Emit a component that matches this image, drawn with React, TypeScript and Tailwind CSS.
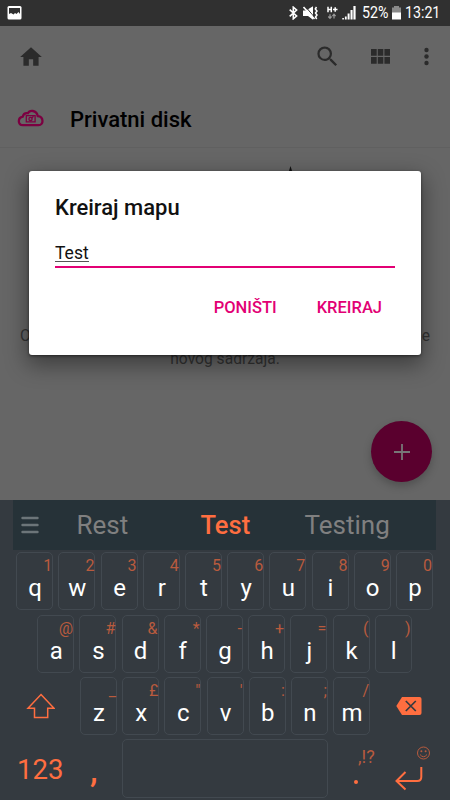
import React from 'react';

const font = "font-['Roboto','Noto_Sans',sans-serif]";

function StatusBar() {
  return (
    <div className="flex h-[26px] shrink-0 items-center bg-[#303030] text-white">
      <svg className="ml-[7px]" width="15" height="14" viewBox="0 0 15 14">
        <rect x="0.5" y="0" width="14" height="13.5" rx="1.5" fill="#fff" />
        <path d="M2 2h11v6l-1.500-2-2 2-1.500-1-1.500 1.500L4 7 2 8z" fill="#303030" />
      </svg>
      <svg className="ml-auto" width="9" height="14" viewBox="0 0 9 14" fill="none" stroke="#fff" strokeWidth="1.600">
        <path d="M.7 3.600 7.600 10 4.300 12.800V1.200L7.600 4 .7 10.400" />
      </svg>
      <svg className="ml-[5px]" width="16" height="14" viewBox="0 0 16 14">
        <path d="M0 4.500h3L10 .3v13.400L5 10H0z" fill="#fff" />
        <path d="M2.300.3 12 12" stroke="#303030" strokeWidth="1" />
        <path d="M.5 1l11 12" stroke="#fff" strokeWidth="1.600" />
        <path d="M13.500 1l-1.200 2L14 5l-1.500 2L14 9l-1.500 2 1.200 2" fill="none" stroke="#fff" strokeWidth="1.500" />
      </svg>
      <svg className="ml-[8px]" width="11" height="14" viewBox="0 0 11 14">
        <path d="M1 .8v5.400M4.300.8v5.400M1 3.500h3.300M6 3.500h4.500M8.200 1.300v4.400" stroke="#fff" strokeWidth="1.500" />
        <path d="M3 8.200v4M1.300 10.500 3 12.400l1.600-1.900M7 12.600v-4M5.400 10.200 7 8.300l1.600 1.900" stroke="#999" strokeWidth="1.200" fill="none" />
      </svg>
      <svg className="ml-[4px]" width="14" height="14" viewBox="0 0 14 14" fill="#fff">
        <path d="M.3 12h1.600v1.500H.3zM2.900 10.500h1.800v3H2.900zM5.600 7.500h2v6h-2zM8.500 4h2.100v9.500H8.500zM11.400 0h2.200v13.500h-2.200z" />
      </svg>
      <span className="ml-[6px] w-[26px] pt-[1px] text-[16.500px] leading-none"><span className="inline-block origin-left scale-x-[0.86]">52%</span></span>
      <svg className="ml-[4px]" width="9" height="14" viewBox="0 0 9 14">
        <path d="M2 0h5v1.500h2V7H0V1.500h2z" fill="#8a8a8a" />
        <rect y="6.500" width="9" height="7" fill="#fff" />
      </svg>
      <span className="mr-[9px] ml-[4px] w-[36px] pt-[1px] text-[16.500px] leading-none"><span className="inline-block origin-left scale-x-[0.86]">13:21</span></span>
    </div>
  );
}

function Toolbar() {
  return (
    <div className="flex h-[61px] items-center pr-[21.500px] pl-[18px] text-[#2b2b2b]">
      <svg width="26" height="26" viewBox="0 0 24 24" fill="currentColor"><path d="M10 20v-6h4v6h5v-8h3L12 3 2 12h3v8z" /></svg>
      <svg className="ml-auto" width="27" height="27" viewBox="0 0 24 24" fill="currentColor">
        <path d="M15.500 14h-.79l-.28-.27A6.471 6.471 0 0 0 16 9.500 6.500 6.500 0 1 0 9.500 16c1.610 0 3.090-.59 4.230-1.570l.27.28v.79l5 4.990L20.490 19l-4.990-5zm-6 0C7.010 14 5 11.990 5 9.500S7.010 5 9.500 5 14 7.010 14 9.500 11.990 14 9.500 14z" />
      </svg>
      <svg className="ml-[29.500px]" width="19" height="15" viewBox="0 0 19 15" fill="currentColor">
        <path d="M0 0h5.700v6.800H0zM6.800 0h5.500v6.800H6.800zM13.400 0H19v6.800h-5.600zM0 8h5.700v6.700H0zM6.800 8h5.500v6.700H6.800zM13.400 8H19v6.700h-5.600z" />
      </svg>
      <svg className="ml-[34px]" width="5" height="19" viewBox="0 0 5 19" fill="currentColor">
        <circle cx="2.500" cy="3" r="2.200" /><circle cx="2.500" cy="9.500" r="2.200" /><circle cx="2.500" cy="16" r="2.200" />
      </svg>
    </div>
  );
}

function Dialog() {
  return (
    <div className="absolute top-[171px] left-[29px] flex h-[184px] w-[392px] flex-col rounded-[3px] bg-white pr-[26px] pl-[26px] shadow-[0_8px_22px_2px_rgba(0,0,0,0.4),0_1px_3px_rgba(0,0,0,0.5)]">
      <h2 className="mt-[26px] text-[22px] leading-[22px] font-medium text-[#111]">Kreiraj mapu</h2>
      <div className="mt-[20px] h-[29px] border-b-2 border-[#e20074] text-[17.500px] leading-[26px] text-[#111]">
        <span className="inline-block h-[23px] border-b border-[#555] leading-[29px]">Test</span>
      </div>
      <div className="mt-[30px] flex justify-end gap-[40px] pr-[13px] text-[16.500px] leading-[20px] font-medium text-[#e20074]">
        <button>PONIŠTI</button>
        <button>KREIRAJ</button>
      </div>
    </div>
  );
}

function Key({ label, hint }: { label: string; hint: string }) {
  return (
    <div className="flex h-[58px] w-[37px] flex-col rounded-[5px] border border-[#424950] pt-[5px]">
      <span className="text-right text-[16px] leading-[16px] text-[#b95b3e]">{hint}</span>
      <span className="mt-[2px] pl-[1px] text-center text-[24px] leading-[24px] text-white">{label}</span>
    </div>
  );
}

function Keys({ labels, hints }: { labels: string; hints: string }) {
  return (
    <div className="flex gap-[5.200px]">
      {labels.split('').map((l, i) => <Key key={l} label={l} hint={hints[i]} />)}
    </div>
  );
}

function Keyboard() {
  return (
    <div className="flex h-[300px] flex-col bg-[#343a40]">
      <div className="mr-[14px] ml-[13px] flex h-[50px] items-center bg-[#263238] text-[26px] text-[#808080]">
        <svg className="ml-[8px]" width="18" height="18" viewBox="0 0 18 18" stroke="#6c7579" strokeWidth="2.400" strokeLinecap="round"><path d="M1.500 2h15M1.500 9h15M1.500 16h15" /></svg>
        <span className="ml-[37.500px] w-[124px]">Rest</span>
        <span className="w-[104px] text-[25.500px] font-medium text-[#ff6e40]">Test</span>
        <span>Testing</span>
      </div>
      <div className="mt-[2px] pl-[16.200px]"><Keys labels="qwertyuiop" hints="1234567890" /></div>
      <div className="mt-[5px] pl-[37.200px]"><Keys labels="asdfghjkl" hints="@#&*-+=()" /></div>
      <div className="mt-[4px] flex items-center">
        <svg className="mr-[25px] ml-[26px]" width="29" height="26" viewBox="0 0 29 26" fill="none" stroke="#ff6e40" strokeWidth="1.500"><path d="M15 1.500 28 15.300h-6.300v9.200H8.500v-9.200H2z" /></svg>
        <Keys labels="zxcvbnm" hints={'_£"\':;/'} />
        <svg className="ml-[26px]" width="26" height="18" viewBox="0 0 26 18">
          <path d="M6 0h17.500Q25.500 0 25.500 2v14q0 2-2 2H6L.3 9z" fill="#ff6e40" />
          <path d="m9.800 4 10 10m0-10-10 10" stroke="#343a40" strokeWidth="1.700" />
        </svg>
      </div>
      <div className="mt-[4px] flex h-[59px] text-[#ff6e40]">
        <span className="ml-[17px] w-[73px] pt-[15px] text-[27.500px] leading-[32px]">123</span>
        <span className="w-[32px] pt-[14px] text-[34px] leading-[34px] font-medium">,</span>
        <div className="h-[59px] w-[206px] rounded-[5px] border border-[#424950]" />
        <div className="ml-[24px] flex w-[30px] flex-col pt-[9px]">
          <span className="ml-[6px] text-[18px] leading-[18px] text-[#b95b3e]">,!?</span>
          <i className="mt-[14px] ml-[2px] size-[4px] rounded-full bg-[#ff6e40]" />
        </div>
        <svg className="ml-[13px]" width="36" height="59" viewBox="0 0 36 59" fill="none">
          <g stroke="#b95b3e"><circle cx="28.500" cy="14" r="6" /><path d="M25 15.500q3.500 4.500 7 0" /></g>
          <g fill="#b95b3e"><circle cx="26.400" cy="12.300" r="1" /><circle cx="30.600" cy="12.300" r="1" /></g>
          <path d="M26.300 28v10q0 4-4 4H2.500M10.500 33l-9 9 9 8.500" stroke="#ff6e40" strokeWidth="2" />
        </svg>
      </div>
    </div>
  );
}

export default function App() {
  return (
    <div className={`relative flex h-[800px] w-[450px] flex-col overflow-hidden bg-[#666] ${font}`}>
      <StatusBar />
      <div className="relative h-[474px] shrink-0 overflow-hidden bg-[#666]">
        <Toolbar />
        <div className="flex h-[61px] items-center border-b border-[#606060] pl-[17px]">
          <svg className="mt-[1px]" width="27" height="18" viewBox="0 0 27 18" fill="none" stroke="#7c0041" strokeWidth="2.300">
            <path d="M6 16.200C.5 16.200.5 8.500 5.800 7.600 6.500 4.500 8.500 3.800 10.800 4.200 12.500 1 19.500.5 20.800 7.200c6.200.6 6 9 .8 9z" />
            <path d="M9.300 6.600h8.800v6.200H9.300z" strokeWidth="1.300" /><circle cx="13.500" cy="9.900" r="1.600" strokeWidth="1.300" /><path d="m14.500 9.200 2-2" strokeWidth="1.300" />
          </svg>
          <h1 className="ml-[26px] pt-[5px] text-[22px] leading-[26px] font-medium text-black">Privatni disk</h1>
        </div>
        <svg className="mt-[18px] ml-[288px]" width="5" height="8" viewBox="0 0 5 8"><path d="M2.500 0 5 8H0z" fill="#111" /></svg>
        <div className="mt-[151px] px-[20px] text-[15.600px] leading-[22px] text-[#333]">
          <div className="flex justify-between"><span>O</span><span>e</span></div>
          <div className="mt-[1px] text-center">novog sadržaja.</div>
        </div>
      </div>
      <button className="absolute top-[421px] left-[371px] flex size-[61px] items-center justify-center rounded-full bg-[#5a002e] shadow-[0_4px_8px_rgba(0,0,0,0.22)]">
        <svg width="16" height="16" viewBox="0 0 16 16" stroke="#777" strokeWidth="1.800"><path d="M8 0v16M0 8h16" /></svg>
      </button>
      <Keyboard />
      <Dialog />
    </div>
  );
}
